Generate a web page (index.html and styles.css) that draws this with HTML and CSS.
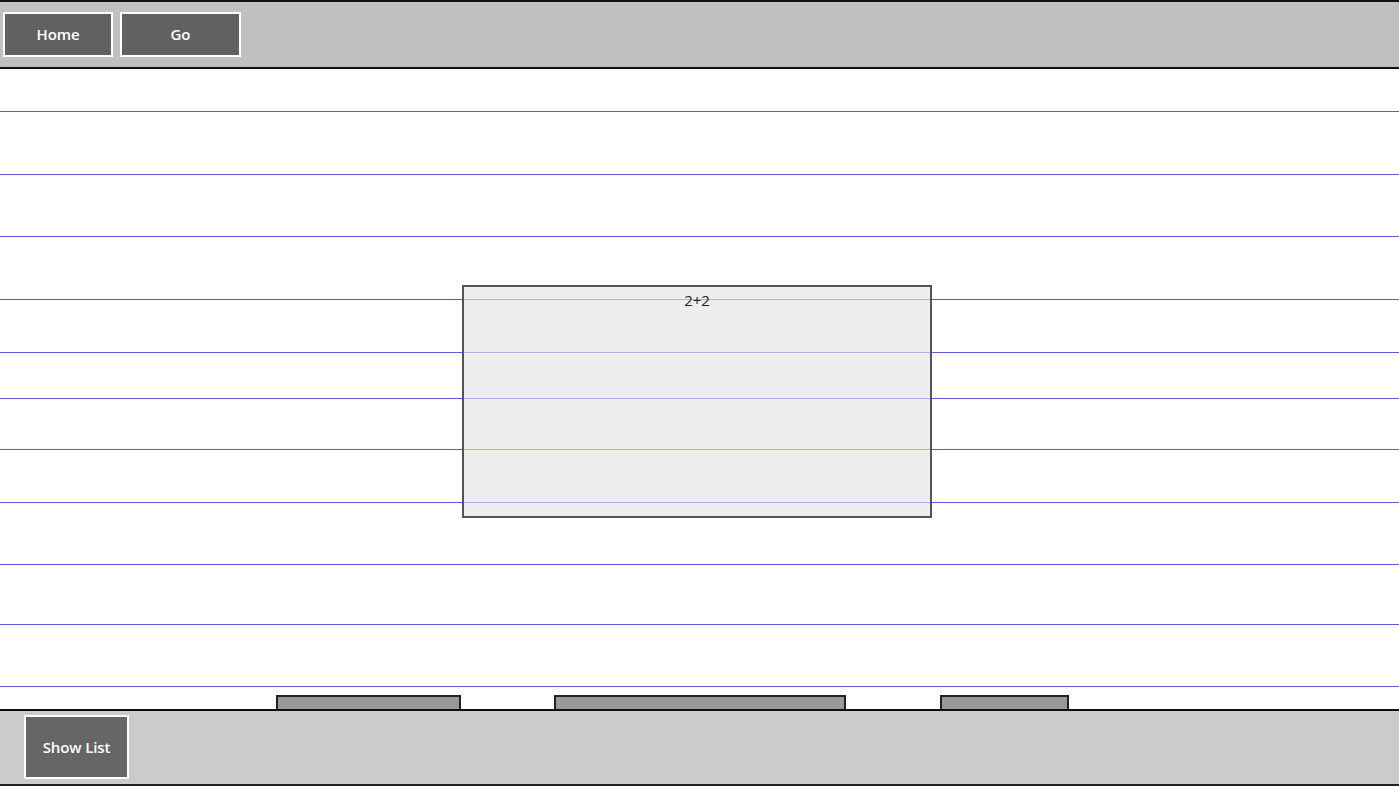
FILE: index.html
```html
<!DOCTYPE html>
<html>
<head>
<meta charset="utf-8">
<link rel="stylesheet" href="styles.css">
</head>
<body>
<div class="app">
  <header class="topbar">
    <button class="btn btn-home">Home</button>
    <button class="btn btn-go">Go</button>
  </header>
  <main class="content">
    <div class="rule r1"></div>
    <div class="rule r2"></div>
    <div class="rule r3"></div>
    <div class="rule r4"></div>
    <div class="rule r5"></div>
    <div class="rule r6"></div>
    <div class="rule r7"></div>
    <div class="rule r8"></div>
    <div class="rule r9"></div>
    <div class="rule r10"></div>
    <div class="rule r11"></div>
    <div class="tabs">
      <div class="tab t1"></div>
      <div class="tab t2"></div>
      <div class="tab t3"></div>
    </div>
    <div class="card"><span class="card-title">2+2</span></div>
  </main>
  <footer class="bottombar">
    <button class="btn btn-list">Show List</button>
  </footer>
</div>
</body>
</html>
```
FILE: styles.css
```css
html, body {
  margin: 0;
  padding: 0;
  background: #ffffff;
}
.app {
  width: 1399px;
  height: 787px;
  display: flex;
  flex-direction: column;
  font-family: "Open Sans", "Noto Sans", sans-serif;
  overflow: hidden;
}
.topbar {
  height: 65px;
  flex: none;
  background: #c0c0c0;
  border-top: 2px solid #111;
  border-bottom: 2px solid #111;
  display: flex;
  align-items: center;
  gap: 7px;
  padding-left: 3px;
}
.btn {
  box-sizing: border-box;
  background: #616161;
  color: #fff;
  border: 2px solid #fff;
  font-family: "Open Sans", "Noto Sans", sans-serif;
  font-weight: 600;
  font-size: 15px;
  padding: 0 0 1px 0;
  margin: 0;
  letter-spacing: -0.1px;
}
.btn-home { width: 110px; height: 45px; }
.btn-go { width: 121px; height: 45px; }
.content {
  position: relative;
  flex: 1;
  display: flex;
  flex-direction: column;
  background: #fff;
}
.rule {
  flex: none;
  border-bottom: 1px solid #5a5ade;
}
.r1 { height: 42px; }
.r2 { height: 62px; }
.r3 { height: 61px; }
.r4 { height: 62px; }
.r5 { height: 52px; }
.r6 { height: 45px; }
.r7 { height: 50px; }
.r8 { height: 52px; }
.r9 { height: 61px; }
.r10 { height: 59px; }
.r11 { height: 61px; }
.tabs {
  flex: 1;
  display: flex;
  align-items: flex-end;
  padding-left: 276px;
}
.tab {
  box-sizing: border-box;
  height: 14px;
  background: #999;
  border: 2px solid #222;
  border-bottom: none;
}
.t1 { width: 185px; }
.t2 { width: 292px; margin-left: 93px; }
.t3 { width: 129px; margin-left: 94px; }
.card {
  position: absolute;
  left: 462px;
  top: 216px;
  box-sizing: border-box;
  width: 470px;
  height: 233px;
  border: 2px solid #555;
  background: rgba(228, 228, 228, 0.62);
  display: flex;
  justify-content: center;
}
.card-title {
  font-size: 15px;
  color: #222;
  margin-top: 3px;
  line-height: 20px;
}
.bottombar {
  flex: none;
  height: 69px;
  background: #cbcbcb;
  border-top: 2px solid #111;
  border-bottom: 2px solid #222;
  margin-bottom: 1px;
  display: flex;
  align-items: flex-start;
  padding-left: 24px;
  padding-top: 4px;
}
.btn-list {
  width: 105px;
  height: 64px;
  background: #666;
}
```
